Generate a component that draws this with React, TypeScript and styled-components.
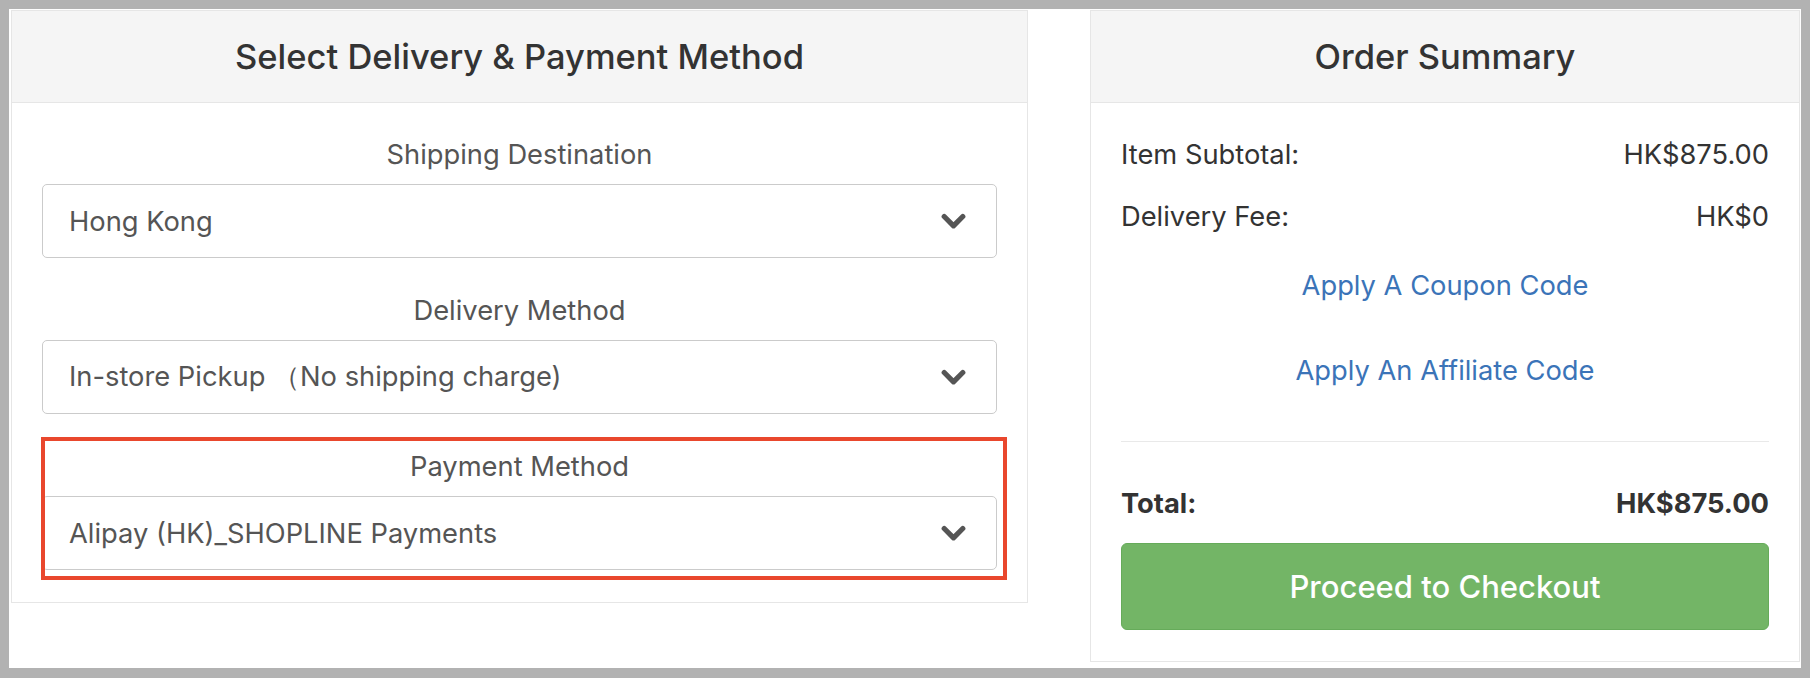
import React from "react";
import styled, { createGlobalStyle } from "styled-components";

const GlobalStyle = createGlobalStyle`
  html, body {
    margin: 0;
    padding: 0;
    background: #b2b2b2;
  }
  body {
    font-family: Inter, "Noto Sans", "Liberation Sans", sans-serif;
    -webkit-font-smoothing: antialiased;
  }
`;

const Frame = styled.div`
  margin: 9px;
  height: 659px;
  box-sizing: border-box;
  padding: 1px 1px 0 2px;
  background: #fff;
  display: flex;
  align-items: flex-start;
  gap: 62px;
`;

const Panel = styled.section<{ $width: number }>`
  width: ${(p) => p.$width}px;
  box-sizing: border-box;
  border: 1px solid #e6e6e6;
  background: #fff;
  flex-shrink: 0;
`;

const PanelHeader = styled.header`
  height: 91px;
  background: #f5f5f5;
  border-bottom: 1px solid #e6e6e6;
  display: flex;
  align-items: center;
  justify-content: center;
`;

const PanelTitle = styled.h2`
  margin: 0;
  font-size: 34.5px;
  font-weight: 500;
  color: #333;
`;

const FormBody = styled.div`
  padding: 32px 30px 34px;
  display: flex;
  flex-direction: column;
  gap: 33px;
`;

const Field = styled.div`
  display: flex;
  flex-direction: column;
`;

const FieldLabel = styled.label`
  height: 40px;
  line-height: 40px;
  margin-bottom: 9px;
  text-align: center;
  font-size: 27.3px;
  color: #555;
`;

const SelectBox = styled.div`
  height: 74px;
  box-sizing: border-box;
  border: 1px solid #cbcbcb;
  border-radius: 5px;
  display: flex;
  align-items: center;
  justify-content: space-between;
  padding: 0 30px 0 26px;
  font-size: 27.3px;
  color: #555;
  background: #fff;
`;

/* red annotation frame drawn over the payment field */
const Highlight = styled.div`
  position: relative;
  margin-bottom: -2px;
  &::after {
    content: "";
    position: absolute;
    top: -10px;
    right: -10px;
    bottom: -10px;
    left: -1px;
    border: 4px solid #e9472d;
    pointer-events: none;
  }
`;

const SummaryBody = styled.div`
  padding: 31px 30px 31px;
  display: flex;
  flex-direction: column;
`;

const SummaryRow = styled.div<{ $strong?: boolean; $gap?: number }>`
  height: 40px;
  display: flex;
  align-items: center;
  justify-content: space-between;
  font-size: 27.3px;
  color: #333;
  font-weight: ${(p) => (p.$strong ? 700 : 400)};
  margin-top: ${(p) => p.$gap ?? 0}px;
`;

const CodeLink = styled.a<{ $gap: number }>`
  height: 40px;
  line-height: 40px;
  text-align: center;
  font-size: 27.3px;
  color: #3b74b8;
  text-decoration: none;
  margin-top: ${(p) => p.$gap}px;
  cursor: pointer;
`;

const Divider = styled.hr`
  margin: 50px 0 0;
  border: 0;
  border-top: 1px solid #e9e9e9;
`;

const CheckoutButton = styled.button`
  margin-top: 20px;
  height: 87px;
  border: 1px solid #66ab5a;
  border-radius: 6px;
  background: #73b566;
  color: #fff;
  font-family: inherit;
  font-size: 31px;
  font-weight: 500;
  cursor: pointer;
`;

const Chevron = () => (
  <svg width="25" height="17" viewBox="0 0 25 17" aria-hidden="true">
    <path
      d="M3.2 3.5 L12.5 12.8 L21.8 3.5"
      fill="none"
      stroke="#555"
      strokeWidth="5.2"
      strokeLinecap="round"
      strokeLinejoin="round"
    />
  </svg>
);

const SelectField: React.FC<{ label: string; value: string }> = ({ label, value }) => (
  <Field>
    <FieldLabel>{label}</FieldLabel>
    <SelectBox>
      <span>{value}</span>
      <Chevron />
    </SelectBox>
  </Field>
);

export default function App() {
  return (
    <>
      <GlobalStyle />
      <Frame>
        <Panel $width={1017}>
          <PanelHeader>
            <PanelTitle>Select Delivery &amp; Payment Method</PanelTitle>
          </PanelHeader>
          <FormBody>
            <SelectField label="Shipping Destination" value="Hong Kong" />
            <SelectField label="Delivery Method" value="In-store Pickup （No shipping charge)" />
            <Highlight>
              <SelectField label="Payment Method" value="Alipay (HK)_SHOPLINE Payments" />
            </Highlight>
          </FormBody>
        </Panel>

        <Panel $width={710}>
          <PanelHeader>
            <PanelTitle>Order Summary</PanelTitle>
          </PanelHeader>
          <SummaryBody>
            <SummaryRow>
              <span>Item Subtotal:</span>
              <span>HK$875.00</span>
            </SummaryRow>
            <SummaryRow $gap={22}>
              <span>Delivery Fee:</span>
              <span>HK$0</span>
            </SummaryRow>
            <CodeLink $gap={30}>Apply A Coupon Code</CodeLink>
            <CodeLink $gap={45}>Apply An Affiliate Code</CodeLink>
            <Divider />
            <SummaryRow $strong $gap={41}>
              <span>Total:</span>
              <span>HK$875.00</span>
            </SummaryRow>
            <CheckoutButton>Proceed to Checkout</CheckoutButton>
          </SummaryBody>
        </Panel>
      </Frame>
    </>
  );
}
